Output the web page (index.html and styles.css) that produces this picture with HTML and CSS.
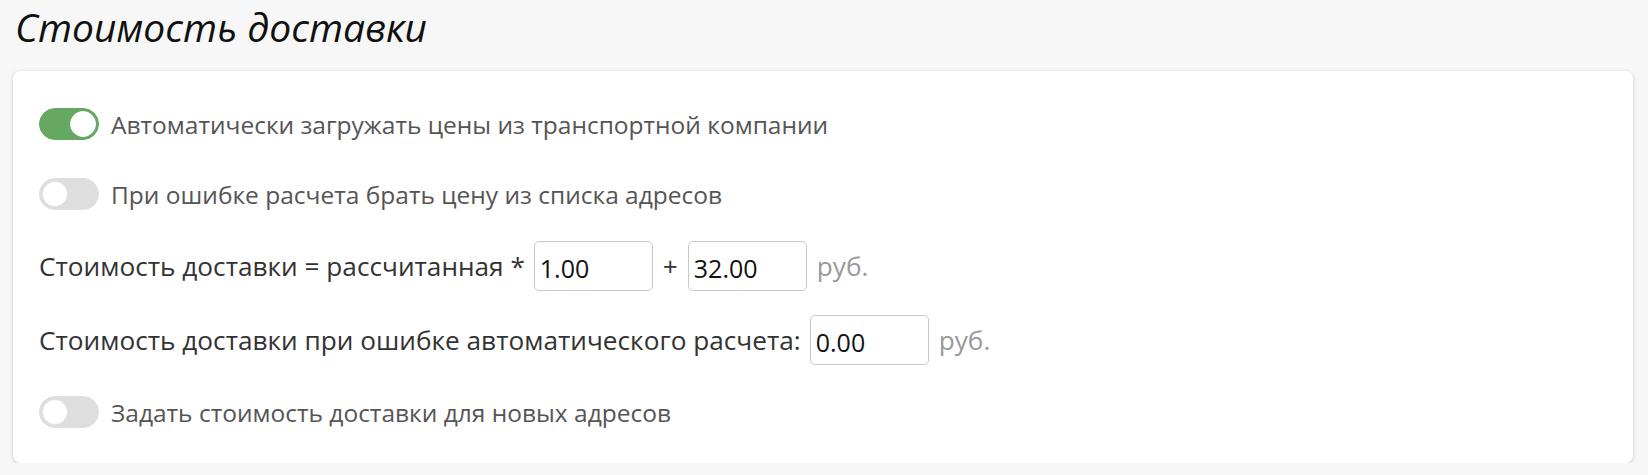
FILE: index.html
```html
<!DOCTYPE html>
<html lang="ru">
<head>
<meta charset="utf-8">
<link rel="stylesheet" href="styles.css">
</head>
<body>
<h1 class="title">Стоимость доставки</h1>
<div class="card">
  <div class="row toggle-row">
    <span class="toggle on"><span class="knob"></span></span>
    <span class="label">Автоматически загружать цены из транспортной компании</span>
  </div>
  <div class="row toggle-row">
    <span class="toggle"><span class="knob"></span></span>
    <span class="label">При ошибке расчета брать цену из списка адресов</span>
  </div>
  <div class="row input-row">
    <span class="text">Стоимость доставки = рассчитанная *</span>
    <input class="field" type="text" value="1.00">
    <span class="text plus">+</span>
    <input class="field" type="text" value="32.00">
    <span class="unit">руб.</span>
  </div>
  <div class="row input-row">
    <span class="text">Стоимость доставки при ошибке автоматического расчета:</span>
    <input class="field" type="text" value="0.00">
    <span class="unit">руб.</span>
  </div>
  <div class="row toggle-row">
    <span class="toggle"><span class="knob"></span></span>
    <span class="label">Задать стоимость доставки для новых адресов</span>
  </div>
</div>
</body>
</html>
```
FILE: styles.css
```css
* { box-sizing: border-box; }
html, body { margin: 0; padding: 0; }
body {
  background: #f7f7f7;
  font-family: "Open Sans", "Noto Sans", sans-serif;
  padding: 0 15px 0 13px;
}
.title {
  margin: 0;
  padding: 3px 0 0 2px;
  height: 71px;
  font-family: "Open Sans", "Noto Sans", sans-serif;
  font-style: italic;
  font-weight: 400;
  font-size: 39px;
  line-height: 48px;
  color: #111;
}
.card {
  background: #fff;
  border-radius: 8px;
  box-shadow: 0 1px 4px rgba(0,0,0,0.18);
  padding: 28px 26px 26px 26px;
  display: flex;
  flex-direction: column;
  gap: 20px;
}
.row {
  display: flex;
  align-items: center;
}
.toggle-row { height: 50px; font-size: 24.5px; }
.input-row { height: 54px; font-size: 26.2px; }
.toggle {
  width: 60px;
  height: 32px;
  border-radius: 16px;
  background: #dedede;
  border: 1px solid #dedede;
  display: flex;
  align-items: center;
  padding: 2px;
  margin-right: 12px;
  flex: none;
}
.toggle .knob {
  width: 26px;
  height: 26px;
  border-radius: 50%;
  background: #fff;
  border: 1px solid #e4e4e4;
}
.toggle.on {
  background: #66a862;
  border-color: #66a862;
  justify-content: flex-end;
}
.toggle.on .knob { border-color: #fff; }
.label { color: #555; }
.text { color: #333; }
.plus { margin: 0 1px 0 10px; }
.field {
  width: 119px;
  height: 50px;
  border: 1px solid #c8c8c8;
  border-radius: 5px;
  padding: 4px 5px 0 5px;
  margin-left: 9px;
  font-family: inherit;
  font-size: 25px;
  color: #111;
  outline: none;
}
.unit {
  color: #999;
  margin-left: 10px;
}
```
